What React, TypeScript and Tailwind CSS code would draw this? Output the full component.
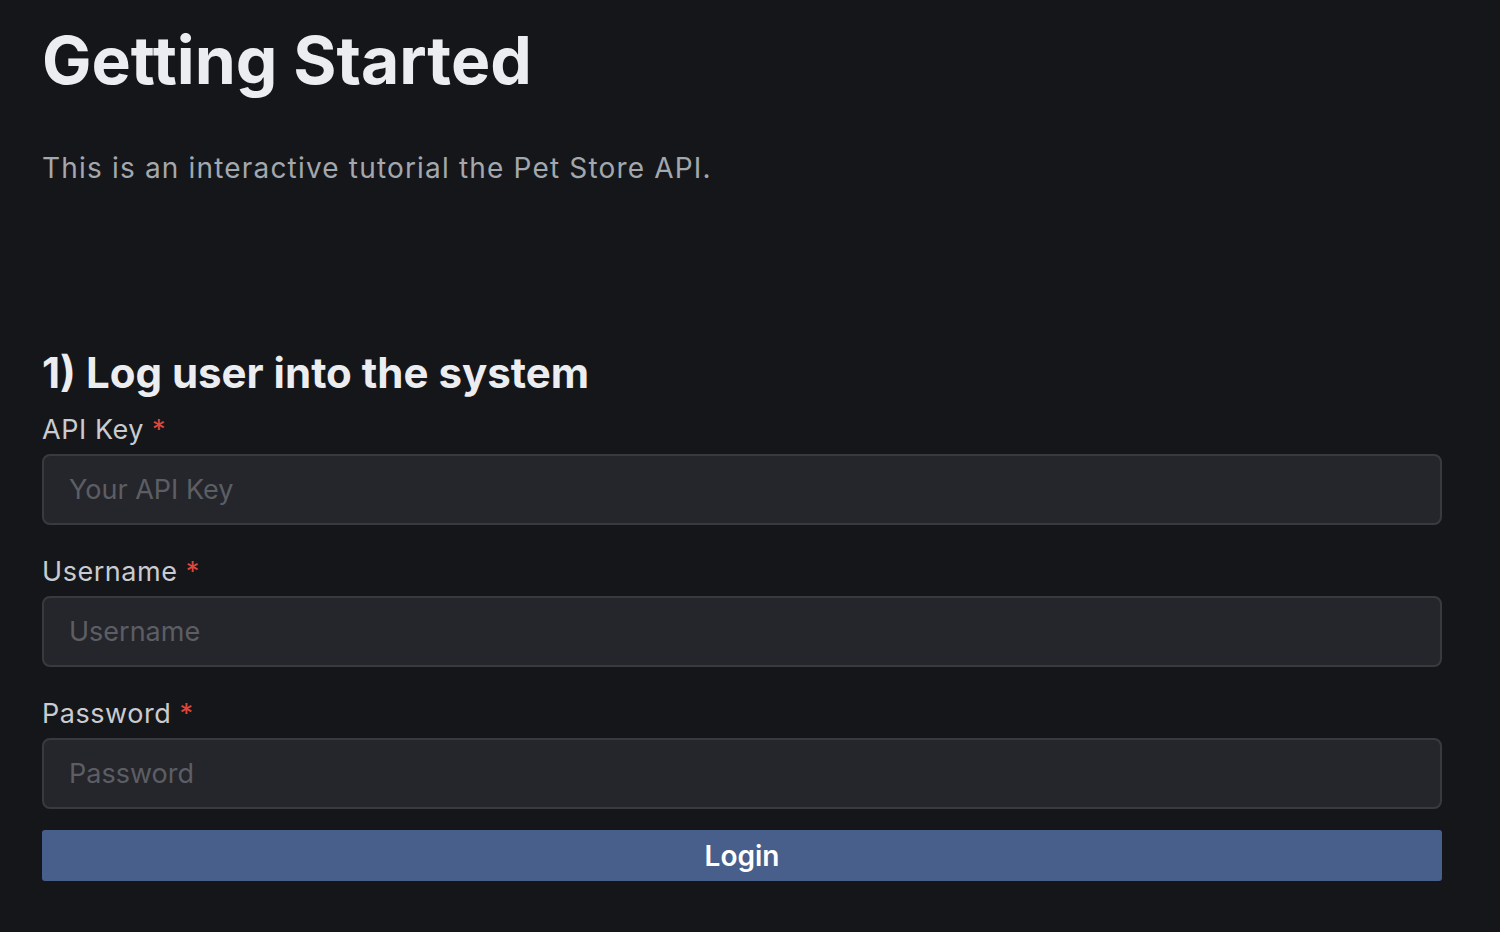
export default function App() {
  const fields = [
    { id: "apiKey", label: "API Key", placeholder: "Your API Key", type: "text" },
    { id: "username", label: "Username", placeholder: "Username", type: "text" },
    { id: "password", label: "Password", placeholder: "Password", type: "password" },
  ]

  return (
    <div className="min-h-[932px] bg-[#151619] px-[42px] pt-[20px] font-['Inter',sans-serif]">
      <div className="w-[1400px]">
        <h1 className="text-[66px] leading-[80px] font-bold text-[#ecedf0]">Getting Started</h1>
        <p className="mt-[48px] text-[28px] leading-[40px] tracking-[0.042em] text-[#a3a7ae]">
          This is an interactive tutorial the Pet Store API.
        </p>
        <h2 className="mt-[160px] text-[42px] leading-[50px] font-bold text-[#ecedf0]">
          1) Log user into the system
        </h2>
        <form className="mt-[16px]" onSubmit={(e) => e.preventDefault()}>
          {fields.map((f, i) => (
            <div key={f.id} className={i > 0 ? "mt-[31px]" : ""}>
              <label htmlFor={f.id} className="block text-[27px] leading-[32px] tracking-[0.02em] text-[#c9cbd0]">
                {f.label} <span className="text-[#e0473c]">*</span>
              </label>
              <input
                id={f.id}
                type={f.type}
                placeholder={f.placeholder}
                className="mt-[8px] block w-full h-[71px] px-[25px] rounded-[8px] border-2 border-[#393a40] bg-[#25262b] text-[27px] text-[#c9cbd0] placeholder:text-[#5c5e64] outline-none"
              />
            </div>
          ))}
          <button
            type="submit"
            className="mt-[21px] block w-full h-[51px] rounded-[3px] bg-[#475f8a] text-white text-[28px] font-semibold"
          >
            Login
          </button>
        </form>
      </div>
    </div>
  )
}
